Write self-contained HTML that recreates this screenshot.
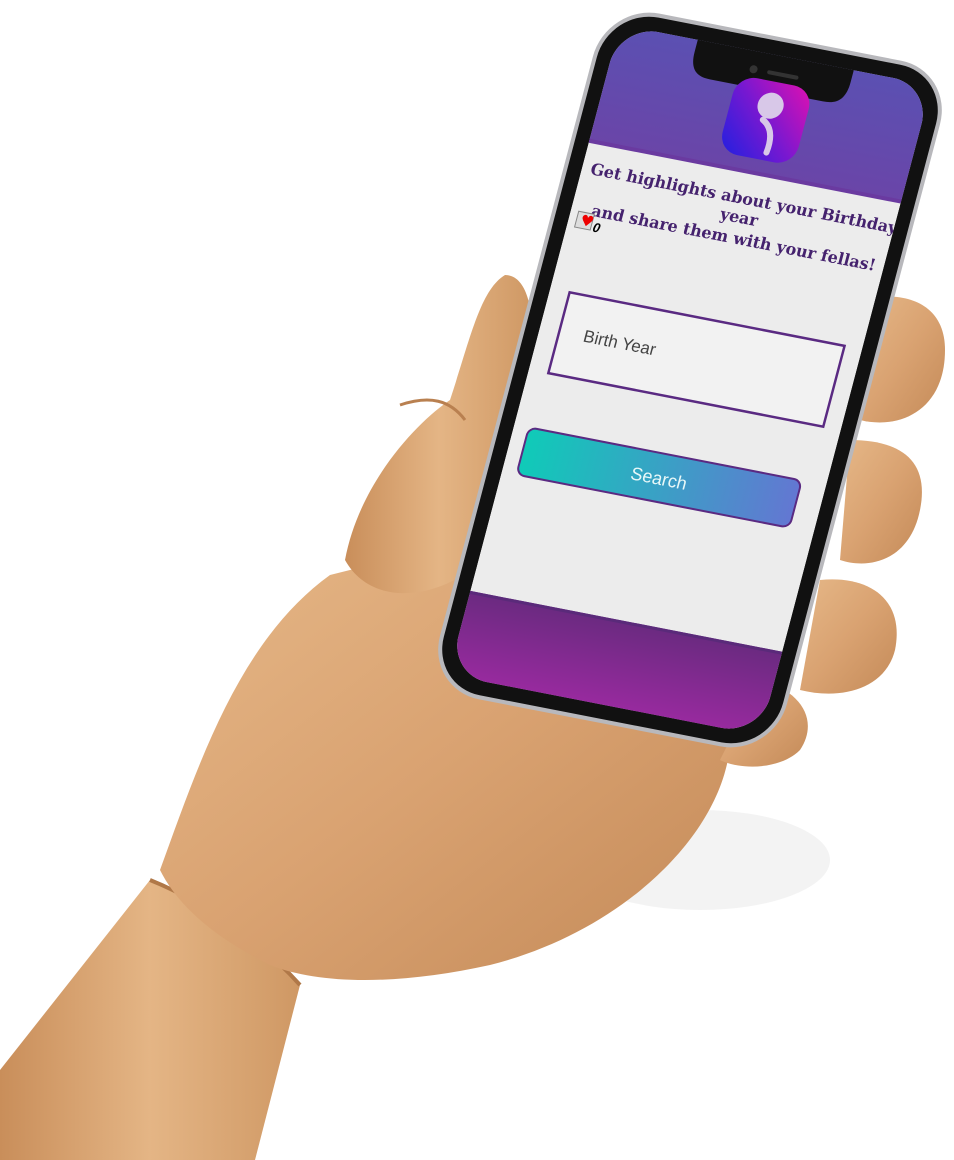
<!DOCTYPE html>
<html><head><meta charset="utf-8"><style>
html,body{margin:0;padding:0;background:#fff;}
svg{display:block}
</style></head><body>
<svg width="954" height="1160" viewBox="0 0 954 1160" xmlns="http://www.w3.org/2000/svg">
<defs>
<linearGradient id="wood" x1="0" y1="0" x2="1" y2="1">
<stop offset="0" stop-color="#e6b888"/><stop offset="0.5" stop-color="#d9a271"/><stop offset="1" stop-color="#c48a58"/>
</linearGradient>
<linearGradient id="wood2" x1="0" y1="0" x2="1" y2="0">
<stop offset="0" stop-color="#c98e5a"/><stop offset="0.5" stop-color="#e4b585"/><stop offset="1" stop-color="#cf9864"/>
</linearGradient>
<linearGradient id="hdr" x1="0" y1="0" x2="0" y2="1">
<stop offset="0" stop-color="#5b50b2"/><stop offset="1" stop-color="#6a45a8"/>
</linearGradient>
<linearGradient id="ftr" x1="0" y1="0" x2="0" y2="1">
<stop offset="0" stop-color="#6a2a80"/><stop offset="1" stop-color="#9a2aa0"/>
</linearGradient>
<linearGradient id="btn" x1="0" y1="0" x2="1" y2="0">
<stop offset="0" stop-color="#0fcbb8"/><stop offset="1" stop-color="#6377d2"/>
</linearGradient>
<linearGradient id="logo" x1="0" y1="1" x2="1" y2="0">
<stop offset="0" stop-color="#2020e0"/><stop offset="0.5" stop-color="#7a18d0"/><stop offset="1" stop-color="#e010b0"/>
</linearGradient>
</defs>

<ellipse cx="700" cy="860" rx="130" ry="50" fill="#eee" opacity="0.7"/>

<path d="M0,1070 L150,880 C200,900 260,940 300,985 L255,1160 L0,1160 Z" fill="url(#wood2)"/>
<path d="M150,880 C200,900 260,940 300,985" stroke="#b07848" stroke-width="4" fill="none"/>
<path d="M160,870 C200,760 240,640 330,575 L470,540 L560,600 L730,720 C740,820 630,930 490,965 C400,985 320,985 270,965 C220,940 180,910 160,870 Z" fill="url(#wood)"/>
<path d="M345,560 C360,480 420,420 450,400 C470,340 480,290 505,275 C530,275 535,320 532,360 C530,430 500,520 470,570 C430,600 370,605 345,560 Z" fill="url(#wood2)"/>
<path d="M400,405 C430,395 450,400 465,420" stroke="#b98050" stroke-width="3" fill="none"/>
<path d="M860,300 C900,290 945,300 945,350 C945,410 900,430 860,420 Z" fill="url(#wood)"/>
<path d="M850,440 C900,440 930,460 920,510 C910,560 870,570 840,560 Z" fill="url(#wood)"/>
<path d="M820,580 C870,575 905,600 895,650 C885,690 840,700 800,690 Z" fill="url(#wood)"/>
<path d="M760,680 C800,690 820,720 800,750 C780,770 740,770 720,760 Z" fill="url(#wood)"/>

<g transform="matrix(0.975,0.19,-0.26,0.985,690,380)">
<rect x="-178" y="-348" width="356" height="696" rx="54" fill="#b8b8bc"/>
<rect x="-174" y="-344" width="348" height="688" rx="50" fill="#111"/>
<clipPath id="scr"><rect x="-160" y="-330" width="320" height="660" rx="40"/></clipPath>
<g clip-path="url(#scr)">
<rect x="-160" y="-330" width="320" height="660" fill="#ececec"/>
<rect x="-160" y="-330" width="320" height="118" fill="url(#hdr)"/>
<rect x="-160" y="-214" width="320" height="4" fill="#6a3aa0"/>
<rect x="-160" y="245" width="320" height="90" fill="url(#ftr)"/>
<rect x="-160" y="245" width="320" height="3" fill="#5a2a7a"/>
<path d="M-80,-332 L80,-332 L80,-318 C80,-300 72,-294 58,-294 L-58,-294 C-72,-294 -80,-300 -80,-318 Z" fill="#111"/>
<circle cx="-18" cy="-312" r="4" fill="#333"/>
<rect x="-4" y="-314" width="32" height="4" rx="2" fill="#333"/>
<rect x="-32" y="-304" width="78" height="78" rx="20" fill="url(#logo)"/>
<circle cx="8" cy="-280" r="13" fill="#d8c8e8"/>
<path d="M4,-265 C14,-260 18,-250 16,-234" stroke="#d8c8e8" stroke-width="6" fill="none" stroke-linecap="round"/>
<g font-family="'DejaVu Serif','Liberation Serif',serif" font-weight="bold" fill="#45226e" font-size="16" text-anchor="middle">
<text x="6" y="-180">Get highlights about your Birthday</text>
<text x="6" y="-161">year</text>
<text x="6" y="-140">and share them with your fellas!</text>
</g>
<rect x="-152" y="-142" width="16" height="16" fill="#ddd" stroke="#888"/>
<text x="-148" y="-129" font-size="15" fill="#e00" font-family="'DejaVu Sans',sans-serif">♥</text>
<text x="-134" y="-125" font-size="13" font-weight="bold" font-style="italic" font-family="'Liberation Sans',sans-serif">0</text>
<rect x="-140" y="-62" width="282" height="82" fill="#f2f2f2" stroke="#5a2a82" stroke-width="2.5"/>
<text x="-115" y="-17" font-family="'Liberation Sans',sans-serif" font-size="17" fill="#444">Birth Year</text>
<rect x="-145" y="76" width="280" height="48" rx="8" fill="url(#btn)" stroke="#5a2a82" stroke-width="2"/>
<text x="-5" y="107" text-anchor="middle" font-family="'Liberation Sans',sans-serif" font-size="18" fill="#e8f8f8">Search</text>
</g>
</g>
</svg>
</body></html>
